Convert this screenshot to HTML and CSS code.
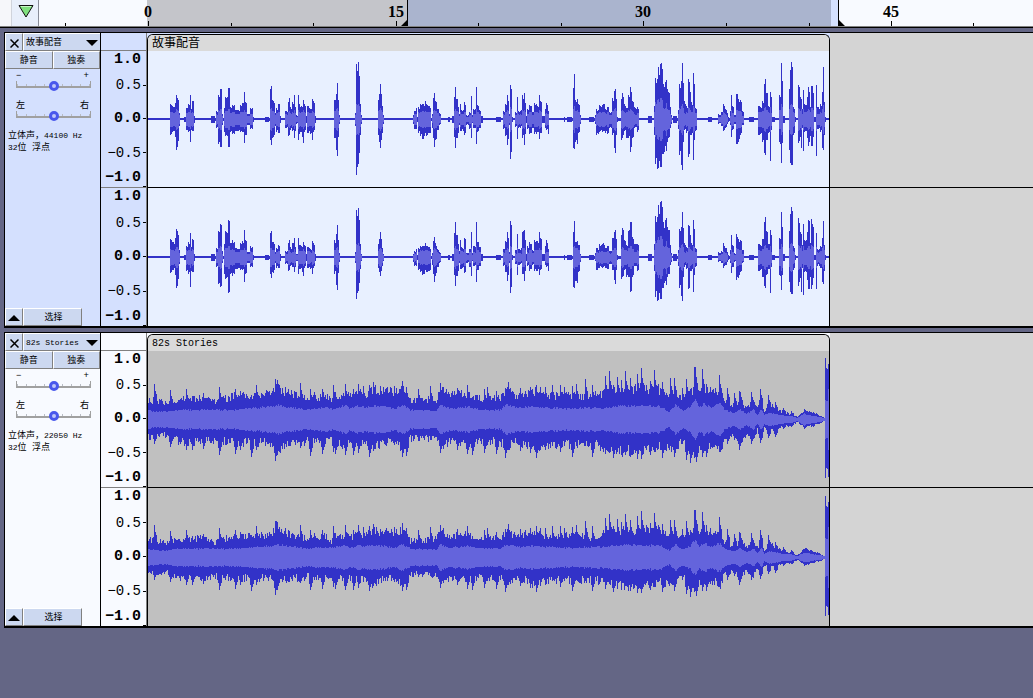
FILE: index.html
```
<!DOCTYPE html>
<html lang="zh-CN">
<head>
<meta charset="utf-8">
<title>82s Stories</title>
<link rel="stylesheet" href="styles.css">
</head>
<body>
<header class="timeline">
  <div class="pin-area"><button class="pin" aria-label="播放头"><svg width="16" height="14" viewBox="0 0 16 14"><path d="M1 1.500H15L8 13Z" fill="#7fe07f" stroke="#111" stroke-width="1"/><path d="M3 2.500H13" stroke="#c8f5c8"/></svg></button></div>
  <svg class="ruler" id="ruler" height="26"></svg>
</header>
<main class="tracks" id="tracks">
  <section class="track selected">
    <div class="panel">
      <div class="title-row"><button class="close" aria-label="关闭"><svg width="9" height="9" viewBox="0 0 9 9"><path d="M.5.5l8 8M8.500.5l-8 8" stroke="#000" stroke-width="1.500"/></svg></button><button class="name">故事配音<svg width="12" height="6" viewBox="0 0 12 6"><path d="M0 0H12L6 6Z"/></svg></button></div>
      <div class="mute-row"><button>静音</button><button>独奏</button></div>
      <label class="slider gain"><span>−</span><span>+</span><input type="range" min="-36" max="36" value="0" aria-label="增益"></label>
      <label class="slider pan"><span>左</span><span>右</span><input type="range" min="-100" max="100" value="0" aria-label="声像"></label>
      <p class="info">立体声，<span class="latin">44100 Hz</span><br><span class="latin">32</span>位 浮点</p>
      <div class="foot-row"><button class="collapse" aria-label="折叠"><svg width="12" height="6" viewBox="0 0 12 6"><path d="M0 6H12L6 0Z"/></svg></button><button class="select">选择</button></div>
    </div>
    <div class="scale">
      <div class="scale-head"></div>
      <ol><li class="b">1.0</li><li class="t">0.5</li><li class="b t">0.0</li><li class="t">−0.5</li><li class="b end">−1.0</li></ol>
      <ol><li class="b">1.0</li><li class="t">0.5</li><li class="b t">0.0</li><li class="t">−0.5</li><li class="b end">−1.0</li></ol>
    </div>
    <div class="lane">
      <div class="clip">
        <h2 class="cjk">故事配音</h2>
        <svg class="wave" data-wave="speechLeft" width="681" height="136"></svg>
        <svg class="wave lower" data-wave="speechRight" width="681" height="138"></svg>
      </div>
      <div class="rest"></div>
    </div>
  </section>
  <section class="track">
    <div class="panel">
      <div class="title-row"><button class="close" aria-label="关闭"><svg width="9" height="9" viewBox="0 0 9 9"><path d="M.5.5l8 8M8.500.5l-8 8" stroke="#000" stroke-width="1.500"/></svg></button><button class="name"><span class="latin">82s Stories</span><svg width="12" height="6" viewBox="0 0 12 6"><path d="M0 0H12L6 6Z"/></svg></button></div>
      <div class="mute-row"><button>静音</button><button>独奏</button></div>
      <label class="slider gain"><span>−</span><span>+</span><input type="range" min="-36" max="36" value="0" aria-label="增益"></label>
      <label class="slider pan"><span>左</span><span>右</span><input type="range" min="-100" max="100" value="0" aria-label="声像"></label>
      <p class="info">立体声，<span class="latin">22050 Hz</span><br><span class="latin">32</span>位 浮点</p>
      <div class="foot-row"><button class="collapse" aria-label="折叠"><svg width="12" height="6" viewBox="0 0 12 6"><path d="M0 6H12L6 0Z"/></svg></button><button class="select">选择</button></div>
    </div>
    <div class="scale">
      <div class="scale-head"></div>
      <ol><li class="b">1.0</li><li class="t">0.5</li><li class="b t">0.0</li><li class="t">−0.5</li><li class="b end">−1.0</li></ol>
      <ol><li class="b">1.0</li><li class="t">0.5</li><li class="b t">0.0</li><li class="t">−0.5</li><li class="b end">−1.0</li></ol>
    </div>
    <div class="lane">
      <div class="clip">
        <h2>82s Stories</h2>
        <svg class="wave" data-wave="musicLeft" width="681" height="136"></svg>
        <svg class="wave lower" data-wave="musicRight" width="681" height="138"></svg>
      </div>
      <div class="rest"></div>
    </div>
  </section>
</main>
<script src="wave.js"></script>
</body>
</html>
```
FILE: styles.css
```
* { box-sizing: border-box; }
body { margin: 0; min-height: 100vh; background: #646685; color: #000; font-family: "Liberation Mono", "Noto Sans CJK SC", monospace; }
button { margin: 0; padding: 0; border: 0; color: #000; font: inherit; display: flex; align-items: center; justify-content: center; background: #ccd8f0; }
svg { display: block; flex: none; }

.timeline { display: flex; height: 28px; background: #f8faff; border-bottom: 1px solid #000; box-shadow: inset 0 -1px #808080; }
.pin-area { width: 39px; height: 26px; padding-left: 11px; border-right: 1px solid #888c98; background: #f6f7fa; }
.pin { width: 27px; height: 26px; padding: 0 0 4px 2px; border-left: 1px solid #d0d4dc; background: #e8effb; }
.ruler { flex: 1; min-width: 0; }
.ruler text { font: bold 16px "Liberation Serif", serif; text-anchor: middle; }

.tracks { display: flex; flex-direction: column; gap: 4px; padding: 4px 0 0 4px; }
.track { display: grid; grid-template-columns: 96px 46px 1fr; height: 296px; border: 1px solid #000; border-right: 0; border-bottom-width: 2px; background: #f8faff; }
.track.selected { background: #d4e0fe; }

.panel { display: flex; flex-direction: column; border-right: 1px solid #000; font-size: 9px; line-height: 12px; }
.title-row, .mute-row, .foot-row { display: flex; flex: none; }
.title-row button, .mute-row button, .foot-row button { height: 18px; padding-top: 2px; border: 1px solid; border-color: #fff #808080 #808080 #fff; }
.title-row .close { width: 18px; }
.title-row .name { flex: 1; justify-content: space-between; padding: 1px 2px 0; border-right: 0; }
.mute-row button { flex: 1; }
.latin { font-size: 8px; }
.slider { display: grid; grid-template: 10px 10px / 1fr 1fr; height: 30px; padding: 0 9px 0 11px; line-height: 10px; }
.slider.gain { margin-top: 2px; }
.slider span:nth-child(2) { padding-right: 2px; text-align: right; }
.slider input { grid-column: 1 / 3; appearance: none; width: 100%; height: 10px; margin: 0; background:
  linear-gradient(#a0a0a0, #a0a0a0) 0 5px / 100% 2px no-repeat,
  linear-gradient(#a0a0a0, #a0a0a0) 0 0 / 1px 5px no-repeat,
  linear-gradient(#a0a0a0, #a0a0a0) 100% 0 / 1px 5px no-repeat,
  repeating-linear-gradient(90deg, #b8bcc4 0 1px, transparent 1px 9px) 1px 3px / 100% 2px no-repeat; }
.slider input::-webkit-slider-thumb { appearance: none; width: 10px; height: 10px; border: 3px solid #4a58ec; border-radius: 50%; background: #c0c8fa; }
.info { margin: -1px 0 0; padding-left: 3px; white-space: nowrap; }
.foot-row { margin-top: auto; }
.foot-row .collapse { width: 18px; }
.foot-row .select { width: 59px; padding-left: 2px; }

.scale { display: grid; grid-template-rows: 18px 136px 139px; border-right: 1px solid #808080; }
.scale-head { border-bottom: 1px solid #808080; }
.scale ol { display: grid; grid-template-rows: 18fr 33fr 35fr 33fr 18fr; margin: 0; padding: 0; list-style: none; font-size: 14px; line-height: 16px; }
.scale ol + ol { border-top: 1px solid #808080; }
.scale li { display: flex; align-items: center; justify-content: flex-end; gap: 2px; min-height: 0; }
.scale li::after { content: ""; width: 3px; }
.scale li.t::after { height: 1px; background: #000; }
.scale li.end::after { align-self: flex-end; height: 1px; background: #000; }
.scale .b { font-size: 15px; line-height: 18px; font-weight: bold; }

.lane { display: flex; min-width: 0; }
.clip { flex: none; margin-top: 1px; border: 1px solid #000; border-bottom: 0; border-radius: 6px 6px 0 0; background: #c0c0c0; overflow: hidden; }
.selected .clip { background: #e8f0ff; }
.clip h2 { margin: 0; height: 16px; padding-left: 4px; background: #dadada; font-size: 10px; font-weight: normal; line-height: 18px; }
.clip h2.cjk { font-size: 12px; }
.lower { border-top: 1px solid #000; box-sizing: content-box; }
.rest { flex: 1; background: linear-gradient(#000, #000) 0 154px / 100% 1px no-repeat #d4d4d4; }
```
FILE: wave.js
```
const ORIGIN = 148;
const DARK = '#3232c8', LIGHT = '#6464dc';

// Speech envelope: "x up down", held until the next x.
const speechLeft = `148 1 0,170 15 15,172 13 12,175 16 17,176 24 30,178 19 21,179 6 6,180 1 0,184 2 2,186 11 10,188 15 12,190 24 22,191 10 10,192 18 11,194 3 3,195 1 0,211 3 3,215 1 1,216 8 8,218 24 24,220 30 27,222 5 5,223 1 1,224 11 12,225 22 16,228 31 27,230 12 12,232 14 14,235 9 11,240 14 12,242 16 12,244 27 23,245 17 15,247 5 5,250 11 9,253 2 2,254 1 0,265 2 2,269 1 1,270 30 20,271 33 25,272 19 18,275 6 6,276 11 12,278 15 13,280 3 3,281 1 0,285 8 8,288 17 16,289 21 15,290 12 10,292 17 11,294 24 18,295 12 11,296 4 4,298 24 20,299 15 14,302 12 17,303 19 23,304 15 12,306 3 3,307 13 13,310 10 14,312 20 20,313 18 12,315 3 3,316 1 0,334 19 18,336 25 30,337 36 36,338 19 17,339 4 4,340 1 0,355 6 6,356 55 55,357 48 47,358 57 44,359 43 33,360 15 15,361 4 4,362 1 0,378 19 15,379 25 22,380 35 28,381 25 20,382 13 13,383 4 4,384 1 0,413 4 4,414 8 9,416 11 9,417 2 2,418 12 13,420 15 16,422 15 19,425 18 13,426 15 16,430 11 13,431 1 1,432 5 8,433 21 18,434 26 27,435 18 20,437 10 10,439 6 5,441 1 0,448 2 2,450 1 0,452 3 3,454 22 17,455 32 28,456 20 18,458 12 13,459 5 5,460 15 11,461 9 11,464 17 15,466 4 5,469 7 9,471 23 18,472 4 3,473 10 8,476 32 24,477 14 12,479 9 8,481 3 3,483 1 0,496 2 2,501 1 0,503 8 9,505 15 16,507 24 25,508 18 19,509 5 5,510 34 39,511 30 32,512 2 2,513 1 0,515 7 7,517 22 19,518 8 8,521 9 6,522 24 18,524 26 25,525 16 14,526 3 3,527 10 9,529 14 14,532 7 8,534 16 14,536 15 14,539 24 19,540 18 13,542 3 3,545 10 8,546 16 10,548 8 14,549 1 0,564 2 2,565 1 0,567 2 2,572 1 1,573 31 28,574 45 29,575 19 22,577 20 24,578 15 13,580 4 4,581 1 0,589 2 2,594 1 1,595 4 4,596 10 15,599 14 12,603 15 11,605 10 13,607 12 14,609 7 8,612 21 15,614 28 28,615 30 33,616 20 15,617 2 2,618 1 1,621 20 20,622 26 18,624 15 11,626 11 18,628 24 18,630 32 32,632 18 18,634 12 8,637 12 12,639 1 0,648 3 3,652 1 0,654 13 15,655 41 44,657 40 49,658 52 48,660 55 47,661 56 47,662 50 34,663 35 34,665 37 26,666 39 31,667 30 22,668 27 18,670 12 8,671 4 4,672 1 0,673 3 3,677 1 1,678 9 9,679 35 35,681 38 45,682 56 50,683 36 22,684 18 10,686 13 13,688 40 37,690 27 15,691 17 15,693 46 40,694 35 20,695 11 11,697 1 0,708 2 2,712 1 0,718 5 4,721 7 6,723 15 11,725 10 8,727 6 4,728 2 2,729 1 1,730 8 5,731 24 17,732 13 10,734 4 4,736 25 24,738 20 22,740 19 15,742 8 5,744 1 0,749 2 2,754 1 0,758 13 15,760 12 14,762 18 22,764 35 33,765 40 35,766 26 20,768 13 13,770 27 41,771 22 10,772 2 2,775 1 0,779 24 22,780 22 24,781 56 43,782 38 23,783 3 3,785 1 0,789 30 30,790 49 43,791 57 45,792 52 45,793 12 15,795 2 2,796 1 0,798 34 23,800 22 17,801 20 28,802 10 8,803 29 31,804 15 12,807 22 18,808 32 26,810 12 16,811 33 26,813 26 17,814 2 2,816 34 36,817 12 9,820 15 12,822 27 28,823 52 30,824 17 15,825 2 2,826 1 0`;
// Level of the right channel against the left: "from up down".
const speechBalance = `148 1.17 1,186 1 1.3,215 1.1 1.07,224 1.2 1.3,235 1 1.04,260 .8 .8,334 .9 .9,355 .86 .75,378 .7 .65,413 .75 .9,454 1.1 1,500 1.05 .9,572 .8 1.05,595 .9 .8,620 1.1 1.05,654 1 .88,678 .8 .85,718 .9 .9,758 1 .85,779 .8 .75,789 .88 .8,798 1.15 1.2,815 .7 .85`;

// Music envelope: "x up down rms", interpolated, with separate "x up down" peaks.
const musicEnv = `148 17 18 8,165 15 15 7,180 18 22 9,200 19 22 9,215 15 20 9,235 21 22 9,255 20 22 11,272 24 22 12,276 30 30 14,285 24 24 12,300 20 22 10,306 17 18 9,325 21 22 11,331 16 18 10,345 22 26 13,350 20 22 10,358 24 26 13,364 20 22 11,372 26 28 13,384 25 22 12,395 24 22 10,402 27 28 14,410 16 18 9,420 17 17 9,436 18 19 8,440 26 27 14,450 22 22 10,467 22 24 12,480 19 20 9,500 19 22 9,506 26 26 14,518 20 21 11,532 26 28 12,545 20 24 11,570 22 24 10,590 20 24 11,605 24 27 11,620 27 30 13,640 27 30 13,660 27 27 12,669 19 26 7,675 24 26 14,683 19 20 8,690 22 28 12,695 28 32 19,699 22 25 12,704 28 27 15,710 22 24 11,720 26 30 15,724 16 18 9,733 10 14 6,740 16 20 9,746 10 15 5,753 14 18 9,757 9 10 4,761 14 18 10,764 7 8 4,770 12 11 6,776 8 8 5,785 6 6 3,791 4 6 3,797 2 2 1,804 8 7 5,812 6 6 3,820 3 3 2,824 1 1 1`;
const musicPeaks = `154 35 24,170 29 27,186 30 30,192 23 30,203 26 29,219 32 35,235 30 34,240 28 30,251 24 37,256 34 30,275 40 41,277 39 35,285 32 24,288 30 26,300 36 28,304 24 26,310 30 36,314 27 22,322 30 34,333 34 32,335 27 34,345 35 35,353 30 35,358 35 33,363 33 24,369 34 37,373 37 31,385 30 22,394 33 25,402 38 37,406 32 36,418 30 21,430 33 20,440 36 33,443 32 28,457 31 30,467 34 34,472 22 35,484 30 33,487 32 25,496 28 34,505 31 38,508 37 30,520 31 31,530 32 33,536 34 38,540 32 30,545 32 30,552 34 24,560 34 32,564 32 25,572 33 37,576 35 24,585 40 24,592 34 37,605 43 34,609 48 29,613 34 38,617 42 32,621 39 32,625 48 31,630 41 37,637 45 39,641 51 39,650 38 35,654 49 32,662 37 38,670 41 26,674 41 37,682 31 24,686 40 40,690 30 43,694 52 38,695 52 37,696 41 42,702 50 37,706 35 37,710 32 29,719 44 32,727 31 24,734 26 20,739 28 30,740 27 24,751 27 24,760 30 23,768 24 18,772 15 9,775 17 17,783 11 9,791 8 7,804 9 9`;

const rows = text => text.split(',').map(r => r.split(' ').map(Number));
function noise(seed) {
  let s = seed * 7919;
  return () => (s = (s * 16807) % 2147483647) / 2147483647;
}
function speech(text, balance, seed) {
  const pts = rows(text), gains = rows(balance), rand = noise(seed), out = [];
  pts.forEach(([x, up, down], i) => {
    const end = i + 1 < pts.length ? pts[i + 1][0] : 829;
    for (let p = x; p < end; p++) {
      const [, gu, gd] = gains.filter(g => g[0] <= p).pop();
      const quiet = up < 4;
      const k = quiet || p === x ? 1 : 0.82 + rand() * 0.2;
      const u = quiet ? up : up * k * gu, d = quiet ? down : down * k * gd;
      const body = up > 38 && p > 653 && p < 669 ? 0.3 : 0.2;
      const rms = quiet ? 0 : Math.min(Math.min(u, d) * 0.6, 4 + Math.max(u, d) * body);
      out.push([p, u, d, rms]);
    }
  });
  return out;
}
function music(env, peaks, gain, seed) {
  const pts = rows(env), rand = noise(seed), out = [];
  const top = new Map();
  const raise = (x, u, d) => { const o = top.get(x) || [0, 0]; top.set(x, [Math.max(o[0], u), Math.max(o[1], d)]); };
  rows(peaks).forEach(([x, u, d]) => { raise(x, u, d); raise(x + 1, u * 0.8, d * 0.88); raise(x - 1, u * 0.62, d * 0.8); raise(x + 2, u * 0.7, d * 0.78); });
  let i = 0;
  for (let x = ORIGIN; x < 825; x++) {
    while (i < pts.length - 2 && pts[i + 1][0] <= x) i++;
    const a = pts[i], b = pts[i + 1], t = Math.min(1, (x - a[0]) / (b[0] - a[0]));
    const mix = n => a[n] + (b[n] - a[n]) * t;
    const t0 = top.get(x) || [0, 0];
    const up = Math.max(mix(1) * (0.9 + rand() * 0.42), t0[0]);
    const down = Math.max(mix(2) * (0.8 + rand() * 0.42), t0[1]);
    out.push([x, up * gain, down * gain, Math.max(0, mix(3) * gain * (0.92 + rand() * 0.2))]);
  }
  [[61, 58, 19], [51, 48, 18], [50, 49, 18], [55, 57, 30]].forEach((v, n) => out.push([825 + n, ...v]));
  return out;
}
const waves = {
  speechLeft: () => speech(speechLeft, '148 1 1', 7),
  speechRight: () => speech(speechLeft, speechBalance, 91),
  musicLeft: () => music(musicEnv, musicPeaks, 1, 17),
  musicRight: () => music(musicEnv, musicPeaks, 0.9, 53)
};
document.querySelectorAll('[data-wave]').forEach(svg => {
  const mid = svg.classList.contains('lower') ? 69 : 68;
  let dark = '', light = '';
  waves[svg.dataset.wave]().forEach(([x, u, d, r]) => {
    u = Math.round(u); d = Math.round(d); r = Math.round(r);
    dark += `M${x - ORIGIN} ${mid - u}h1v${u + d + 1}h-1z`;
    if (r) light += `M${x - ORIGIN} ${mid - r}h1v${2 * r + 1}h-1z`;
  });
  svg.innerHTML = `<path fill="${DARK}" d="${dark}"/><path fill="${LIGHT}" d="${light}"/>`;
});

// Time ruler, coordinates relative to its left edge.
const at = x => x - 39;
let ruler = `<path fill="#c4c5ca" d="M${at(147)} 0H${at(407)}V26H${at(147)}z"/><path fill="#aab4ce" d="M${at(408)} 0H${at(831)}V26H${at(408)}z"/><path fill="#d4e0fe" d="M${at(831)} 0H${at(838)}V26H${at(831)}z"/><path d="M${at(407)} 0h1v26h-7l6-6zM${at(838)} 0h1v20l6 6h-7z"/>`;
[65, 148, 231, 313, 396, 478, 561, 643, 726, 809, 891, 973].forEach((x, i) => {
  const h = i % 3 === 1 ? 5 : 3;
  ruler += `<path d="M${at(x)} ${26 - h}h1v${h}h-1z"/>`;
  if (h === 5) ruler += `<text x="${at(x)}" y="17">${(i - 1) * 5}</text>`;
});
document.getElementById('ruler').innerHTML = ruler;
```
